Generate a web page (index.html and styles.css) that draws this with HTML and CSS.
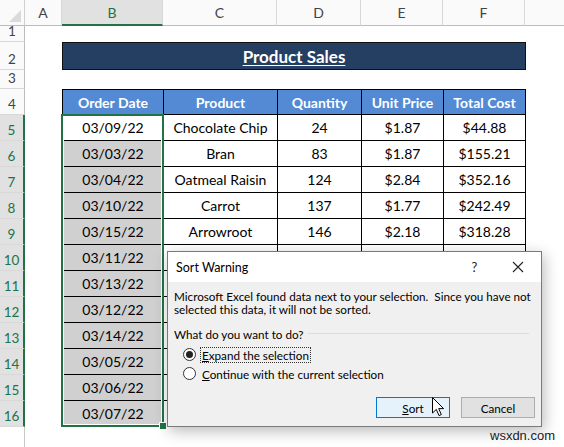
FILE: index.html
```html
<!DOCTYPE html>
<html>
<head>
<meta charset="utf-8">
<link rel="stylesheet" href="styles.css">
</head>
<body>
<div class="sheet">
  <div class="colhead">
    <div class="corner"><span class="tri"></span></div>
    <div class="ch w-a">A</div>
    <div class="ch w-b sel">B</div>
    <div class="ch w-c">C</div>
    <div class="ch w-d">D</div>
    <div class="ch w-e">E</div>
    <div class="ch w-f">F</div>
    <div class="ch rest"></div>
  </div>
  <div class="body">
    <div class="rowhead">
      <div class="rh h16">1</div>
      <div class="rh h28">2</div>
      <div class="rh h19">3</div>
      <div class="rh h26">4</div>
      <div class="rh h26 sel">5</div>
      <div class="rh h26 sel">6</div>
      <div class="rh h26 sel">7</div>
      <div class="rh h26 sel">8</div>
      <div class="rh h26 sel">9</div>
      <div class="rh h26 sel">10</div>
      <div class="rh h26 sel">11</div>
      <div class="rh h26 sel">12</div>
      <div class="rh h26 sel">13</div>
      <div class="rh h26 sel">14</div>
      <div class="rh h26 sel">15</div>
      <div class="rh h26 sel">16</div>
      <div class="rh fill"></div>
    </div>
    <div class="cells">
      <div class="gap1"></div>
      <div class="title"><span>Product Sales</span></div>
      <div class="gap3"></div>
      <div class="tblwrap">
        <div class="tbl">
          <div class="th">Order Date</div><div class="th">Product</div><div class="th">Quantity</div><div class="th">Unit Price</div><div class="th">Total Cost</div>
          <div class="td">03/09/22</div><div class="td">Chocolate Chip</div><div class="td">24</div><div class="td">$1.87</div><div class="td">$44.88</div>
          <div class="td gs">03/03/22</div><div class="td">Bran</div><div class="td">83</div><div class="td">$1.87</div><div class="td">$155.21</div>
          <div class="td gs">03/04/22</div><div class="td">Oatmeal Raisin</div><div class="td">124</div><div class="td">$2.84</div><div class="td">$352.16</div>
          <div class="td gs">03/10/22</div><div class="td">Carrot</div><div class="td">137</div><div class="td">$1.77</div><div class="td">$242.49</div>
          <div class="td gs">03/15/22</div><div class="td">Arrowroot</div><div class="td">146</div><div class="td">$2.18</div><div class="td">$318.28</div>
          <div class="td gs">03/11/22</div><div class="td"></div><div class="td"></div><div class="td"></div><div class="td"></div>
          <div class="td gs">03/13/22</div><div class="td"></div><div class="td"></div><div class="td"></div><div class="td"></div>
          <div class="td gs">03/12/22</div><div class="td"></div><div class="td"></div><div class="td"></div><div class="td"></div>
          <div class="td gs">03/14/22</div><div class="td"></div><div class="td"></div><div class="td"></div><div class="td"></div>
          <div class="td gs">03/05/22</div><div class="td"></div><div class="td"></div><div class="td"></div><div class="td"></div>
          <div class="td gs">03/06/22</div><div class="td"></div><div class="td"></div><div class="td"></div><div class="td"></div>
          <div class="td gs">03/07/22</div><div class="td"></div><div class="td"></div><div class="td"></div><div class="td"></div>
        </div>
        <div class="selbox"><span class="handle"></span></div>
      </div>
    </div>
  </div>

  <div class="dialog">
    <div class="dtitle">
      <span class="dname">Sort Warning</span>
      <span class="dctl help">?</span>
      <span class="dctl close"><svg width="12" height="12" viewBox="0 0 12 12"><path d="M1 1 L11 11 M11 1 L1 11" stroke="#222" stroke-width="1.1" fill="none"/></svg></span>
    </div>
    <div class="dbody">
      <p class="msg">Microsoft Excel found data next to your selection.&nbsp; Since you have not</p>
      <p class="msg">selected this data, it will not be sorted.</p>
      <div class="group"><span class="glabel">What do you want to do?</span><span class="gline"></span></div>
      <div class="opt first"><span class="radio on"></span><span class="olabel focus"><u>E</u>xpand the selection</span></div>
      <div class="opt"><span class="radio"></span><span class="olabel"><u>C</u>ontinue with the current selection</span></div>
      <div class="btns">
        <span class="btn def"><u>S</u>ort</span>
        <span class="btn">Cancel</span>
      </div>
    </div>
  </div>

  <svg class="cursor" width="13" height="20" viewBox="0 0 13 20"><path d="M0.5 0.5 L0.5 16 L4.3 12.4 L7 18.6 L9.3 17.6 L6.7 11.6 L11.6 11.6 Z" fill="#fff" stroke="#000" stroke-width="1" stroke-linejoin="round"/></svg>

  <div class="wm">wsxdn.com</div>
</div>
</body>
</html>
```

FILE: styles.css
```css
html, body {
  margin: 0;
  padding: 0;
  background: #fff;
}
.sheet {
  position: relative;
  width: 564px;
  height: 447px;
  overflow: hidden;
  display: flex;
  flex-direction: column;
  font-family: Lato, "Liberation Sans", sans-serif;
  color: #000;
}
.colhead {
  display: flex;
  height: 26px;
  flex: none;
}
.corner {
  position: relative;
  width: 25px;
  box-sizing: border-box;
  border-right: 1px solid #cfcfcf;
  border-bottom: 1px solid #bcbcbc;
  background: #fafafa;
}
.tri {
  position: absolute;
  right: 3px;
  bottom: 3px;
  width: 0;
  height: 0;
  border-left: 12px solid transparent;
  border-bottom: 12px solid #dadada;
}
.ch {
  box-sizing: border-box;
  height: 26px;
  border-right: 1px solid #d8d8d8;
  border-bottom: 1px solid #bcbcbc;
  background: #fafafa;
  color: #444;
  font-size: 14px;
  display: flex;
  align-items: center;
  justify-content: center;
}
.ch.sel {
  background: #e1e1e1;
  border-bottom: 2px solid #217346;
  color: #217346;
}
.w-a { width: 37px; }
.w-b { width: 101px; }
.w-c { width: 114px; }
.w-d { width: 84px; }
.w-e { width: 82px; }
.w-f { width: 82px; }
.ch.rest { flex: 1; border-right: none; }

.body {
  display: flex;
  flex: 1;
}
.rowhead {
  width: 25px;
  display: flex;
  flex-direction: column;
  flex: none;
}
.rh {
  box-sizing: border-box;
  border-bottom: 1px solid #d8d8d8;
  border-right: 1px solid #bcbcbc;
  background: #fafafa;
  color: #444;
  font-size: 13.5px;
  display: flex;
  align-items: flex-end;
  justify-content: center;
  padding-bottom: 2px;
}
.rh.sel {
  background: #e1e1e1;
  color: #217346;
  border-right: 2px solid #217346;
}
.h16 { height: 16px; }
.h28 { height: 28px; }
.h19 { height: 19px; }
.h26 { height: 26px; }
.rh.fill {
  flex: 1;
  background: #fff;
  border-bottom: none;
  border-right: 1px solid #c8c8c8;
}

.cells {
  padding-left: 37px;
  display: flex;
  flex-direction: column;
}
.gap1 { height: 16px; }
.gap3 { height: 19px; }
.title {
  box-sizing: border-box;
  width: 464px;
  height: 28px;
  background: #243f61;
  border: 1px solid #111;
  display: flex;
  align-items: center;
  justify-content: center;
}
.title span {
  color: #fff;
  font-weight: bold;
  font-size: 17px;
  text-decoration: underline;
  text-underline-offset: 2px;
}
.tblwrap {
  position: relative;
  width: 464px;
}
.tbl {
  display: grid;
  grid-template-columns: 101px 114px 84px 82px 82px;
  grid-template-rows: 25px repeat(12, 26px);
  border-left: 1px solid #000;
  border-top: 1px solid #000;
  width: 463px;
}
.th, .td {
  box-sizing: border-box;
  border-right: 1px solid #000;
  border-bottom: 1px solid #000;
  display: flex;
  align-items: center;
  justify-content: center;
  font-size: 14px;
}
.th {
  background: #538ad3;
  color: #fff;
  font-weight: bold;
}
.td { background: #fff; }
.td.gs { background: #d0d0d0; }
.selbox {
  position: absolute;
  left: -1px;
  top: 25px;
  width: 103px;
  height: 313px;
  box-sizing: border-box;
  border: 2px solid #217346;
  box-shadow: inset 0 0 0 1px #fff;
}
.handle {
  position: absolute;
  right: -5px;
  bottom: -5px;
  width: 6px;
  height: 6px;
  background: #217346;
  border: 1px solid #fff;
}

.dialog {
  position: absolute;
  left: 167px;
  top: 251px;
  width: 375px;
  height: 176px;
  box-sizing: border-box;
  border: 1px solid #7a7a7a;
  background: #f0f0f0;
  box-shadow: 2px 4px 14px rgba(0,0,0,0.28);
  font-family: Lato, "Liberation Sans", sans-serif;
  font-size: 11.7px;
  color: #000;
}
.dtitle {
  height: 30px;
  background: #fff;
  display: flex;
  align-items: center;
  padding-left: 8px;
}
.dname {
  font-size: 12.5px;
  flex: 1;
}
.dctl {
  width: 46px;
  height: 30px;
  display: flex;
  align-items: center;
  justify-content: center;
  font-size: 13px;
  color: #222;
}
.help { padding-left: 5px; box-sizing: border-box; }
.dbody {
  padding: 8px 6px 0 6px;
}
.msg {
  margin: 0;
  height: 13px;
  line-height: 13px;
  white-space: nowrap;
}
.group {
  margin-top: 10px;
  height: 15px;
  display: flex;
  align-items: center;
  padding-right: 6px;
}
.glabel { white-space: nowrap; }
.gline {
  flex: 1;
  height: 1px;
  background: #dcdcdc;
  margin-left: 5px;
}
.opt {
  height: 19px;
  display: flex;
  align-items: center;
  padding-left: 9px;
}
.opt.first { margin-top: 4px; }
.radio {
  width: 13px;
  height: 13px;
  box-sizing: border-box;
  border: 1px solid #333;
  border-radius: 50%;
  background: #fff;
  margin-right: 4px;
  position: relative;
}
.radio.on::after {
  content: "";
  position: absolute;
  left: 2px;
  top: 2px;
  width: 7px;
  height: 7px;
  border-radius: 50%;
  background: #222;
}
.olabel {
  padding: 0 1px;
  border: 1px dotted transparent;
  line-height: 14px;
}
.olabel.focus { border-color: #333; }
.btns {
  margin-top: 14px;
  display: flex;
  justify-content: flex-end;
  gap: 11px;
  padding-right: 0;
}
.btn {
  box-sizing: border-box;
  width: 74px;
  height: 21px;
  border: 1px solid #adadad;
  background: #e1e1e1;
  display: flex;
  align-items: center;
  justify-content: center;
}
.btn.def {
  border-color: #0078d7;
  background: #e5f1fb;
}
.cursor {
  position: absolute;
  left: 432px;
  top: 397px;
}
.wm {
  position: absolute;
  left: 490px;
  top: 428px;
  font-family: "Liberation Sans", Arial, sans-serif;
  font-size: 13px;
  color: #222;
}
```
